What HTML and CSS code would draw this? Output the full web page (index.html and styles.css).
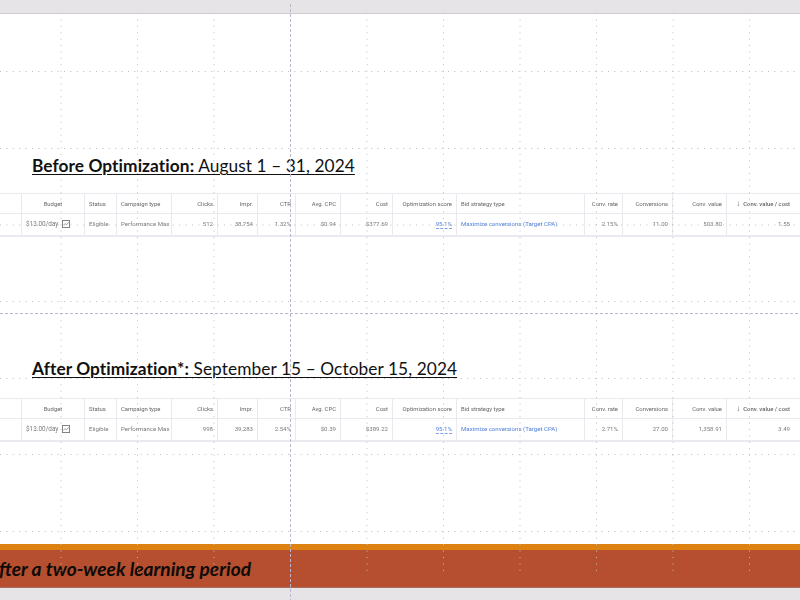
FILE: index.html
```html
<!DOCTYPE html>
<html lang="en">
<head>
<meta charset="utf-8">
<title>Before and after optimization</title>
<link rel="stylesheet" href="styles.css">
</head>
<body>
<div class="window">
  <div class="chrome-top"></div>
  <main class="slide">
    <section class="block block-before">
      <h2 class="heading"><span class="heading-text"><b>Before Optimization:</b> August 1 – 31, 2024</span></h2>
      <div class="table">
        <div class="cell"></div><div class="cell center">Budget</div><div class="cell">Status</div><div class="cell">Campaign type</div><div class="cell right">Clicks</div><div class="cell right">Impr.</div><div class="cell right">CTR</div><div class="cell right">Avg. CPC</div><div class="cell right">Cost</div><div class="cell right">Optimization score</div><div class="cell">Bid strategy type</div><div class="cell right">Conv. rate</div><div class="cell right">Conversions</div><div class="cell right">Conv. value</div><div class="cell right sort"><span class="arrow">↓</span> Conv. value / cost</div>
        <div class="cell data"></div><div class="cell data budget">$13.00/day <svg class="chart" viewBox="0 0 9 9"><rect x="0.5" y="0.5" width="8" height="8" fill="none" stroke="#777"/><path d="M1.500 6l2-2 1.500 1.500 2.500-3" fill="none" stroke="#777" stroke-width="0.8"/></svg></div><div class="cell data">Eligible</div><div class="cell data">Performance Max</div><div class="cell data right">512</div><div class="cell data right">38,754</div><div class="cell data right">1.32%</div><div class="cell data right">$0.94</div><div class="cell data right">$377.69</div><div class="cell data right"><span class="score">95.1%</span></div><div class="cell data link">Maximize conversions (Target CPA)</div><div class="cell data right">2.15%</div><div class="cell data right">11.00</div><div class="cell data right">503.80</div><div class="cell data right">1.55</div>
      </div>
    </section>
    <section class="block block-after">
      <h2 class="heading heading-after"><span class="heading-text"><b>After Optimization*:</b> September 15 – October 15, 2024</span></h2>
      <div class="table">
        <div class="cell"></div><div class="cell center">Budget</div><div class="cell">Status</div><div class="cell">Campaign type</div><div class="cell right">Clicks</div><div class="cell right">Impr.</div><div class="cell right">CTR</div><div class="cell right">Avg. CPC</div><div class="cell right">Cost</div><div class="cell right">Optimization score</div><div class="cell">Bid strategy type</div><div class="cell right">Conv. rate</div><div class="cell right">Conversions</div><div class="cell right">Conv. value</div><div class="cell right sort"><span class="arrow">↓</span> Conv. value / cost</div>
        <div class="cell data"></div><div class="cell data budget">$13.00/day <svg class="chart" viewBox="0 0 9 9"><rect x="0.5" y="0.5" width="8" height="8" fill="none" stroke="#777"/><path d="M1.500 6l2-2 1.500 1.500 2.500-3" fill="none" stroke="#777" stroke-width="0.8"/></svg></div><div class="cell data">Eligible</div><div class="cell data">Performance Max</div><div class="cell data right">998</div><div class="cell data right">39,283</div><div class="cell data right">2.54%</div><div class="cell data right">$0.39</div><div class="cell data right">$389.22</div><div class="cell data right"><span class="score">95.1%</span></div><div class="cell data link">Maximize conversions (Target CPA)</div><div class="cell data right">2.71%</div><div class="cell data right">27.00</div><div class="cell data right">1,358.91</div><div class="cell data right">3.49</div>
      </div>
    </section>
  </main>
  <footer class="banner">
    <p class="banner-text">fter a two-week learning period</p>
  </footer>
  <div class="chrome-bottom"></div>
  <svg class="guides" viewBox="0 0 800 600" aria-hidden="true">
    <g class="dots">
      <path d="M0 71.500H800M0 148.500H800M0 225H800M0 301.500H800M0 378.500H800M0 454.500H800M0 531.500H800"/>
      <path d="M61 13V575M137.500 13V575M214 13V575M367 13V575M443.500 13V575M520 13V575M596.500 13V575M673 13V575M749.500 13V575"/>
    </g>
    <path class="dash" d="M290.500 4V600M0 313.500H800"/>
  </svg>
</div>
</body>
</html>
```
FILE: styles.css
```css
* { box-sizing: border-box; }
html, body { margin: 0; padding: 0; height: 100%; overflow: hidden; background: #fff; }
.window { position: relative; width: 800px; height: 600px; display: flex; flex-direction: column; overflow: hidden; font-family: "Lato", "Liberation Sans", sans-serif; }
.chrome-top { height: 14px; flex: none; background: #e6e4e7; border-bottom: 1px solid #cfcdd0; }
.slide { flex: none; height: 530px; display: flex; flex-direction: column; background: #fff; }
.block { flex: none; }
.block-before { padding-top: 138px; }
.block-after { padding-top: 118px; }
.heading { margin: 0 0 14px; padding-left: 32px; height: 27px; font-size: 17.300px; letter-spacing: 0.08px; line-height: 27px; font-weight: 400; color: #111; white-space: nowrap; }
.heading-after { margin-bottom: 16px; }
.heading-text { text-decoration: underline; text-underline-offset: 2px; text-decoration-thickness: 1px; }
.heading b { font-weight: 700; }
.table { display: grid; grid-template-columns: 22px 63px 32px 55px 46px 40px 38px 45px 52px 64px 128px 38px 50px 54px 73px; grid-template-rows: 20px 21px; border-top: 1px solid #ebe9f0; border-bottom: 2px solid #ebe9f0; font-family: "Roboto", "Liberation Sans", sans-serif; font-size: 5.900px; color: #666; filter: blur(0.45px); }
.cell { display: flex; align-items: center; padding: 0 4px; border-right: 1px solid #ebe9f0; border-bottom: 1px solid #ebe9f0; white-space: nowrap; overflow: hidden; min-width: 0; }
.cell.data { color: #7c7c7c; border-bottom: 0; font-size: 6.100px; padding-bottom: 2px; }
.cell.data.link { color: #4f7fdc; }
.cell.data.budget { font-size: 6.400px; gap: 4px; }
.cell:nth-child(15n) { border-right: 0; padding-right: 10px; }
.center { justify-content: center; }
.right { justify-content: flex-end; }
.sort { font-weight: 500; gap: 3px; }
.arrow { font-size: 8px; }
.chart { width: 8px; height: 8px; flex: none; }
.score { color: #4f7fdc; border-bottom: 1px dashed #7fa0e6; line-height: 9px; }
.banner { height: 44px; flex: none; background: #b54f2f; border-top: 6px solid #dd8211; border-bottom: 1px solid #a8705c; display: flex; align-items: center; overflow: hidden; }
.banner-text { margin: 0 0 0 -1px; font-size: 19.150px; font-weight: 700; font-style: italic; color: #0e0a08; white-space: nowrap; }
.chrome-bottom { flex: 1; background: #e6e4e7; }
.guides { position: absolute; inset: 0; width: 800px; height: 600px; pointer-events: none; }
.dots path { fill: none; stroke: #bfbdc3; stroke-width: 1; stroke-dasharray: 1 5.400; }
.dash { fill: none; stroke: #bdb5cb; stroke-width: 1; stroke-dasharray: 3 2; }
```
